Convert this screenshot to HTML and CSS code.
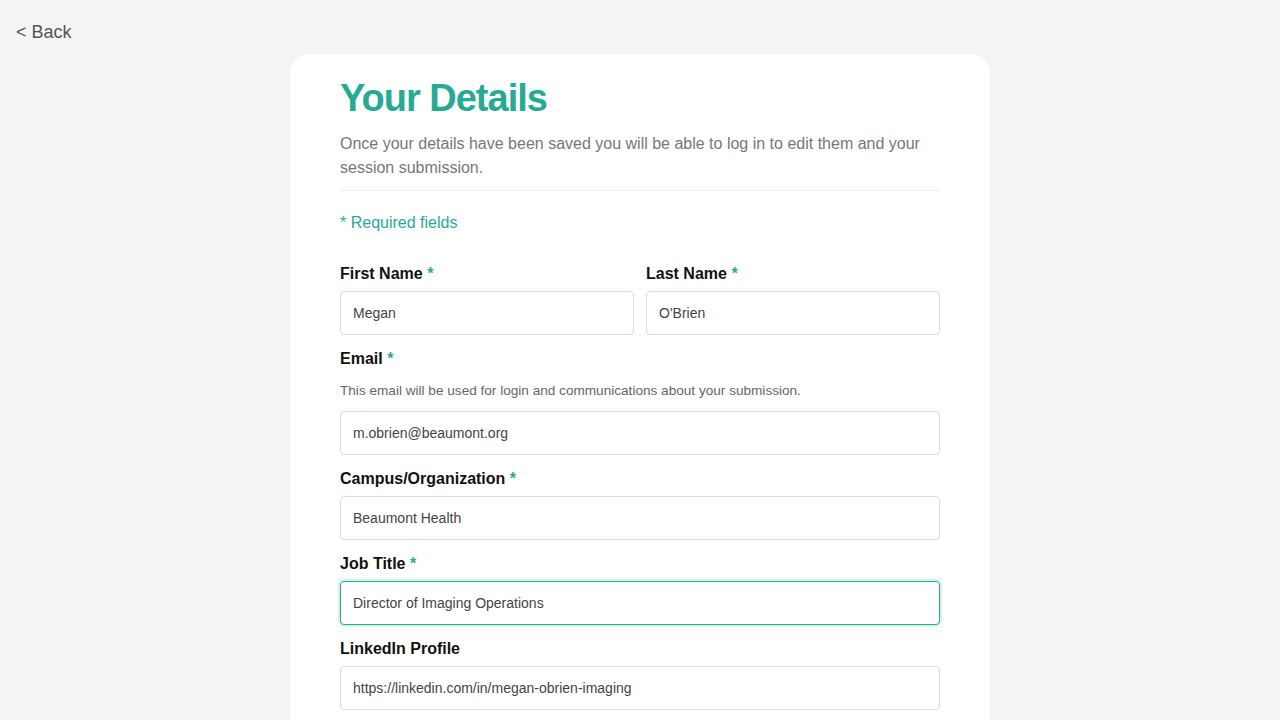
FILE: index.html
```html
<!DOCTYPE html>
<html lang="en">
<head>
    <meta charset="UTF-8">
    <meta name="viewport" content="width=device-width, initial-scale=1.0">
    <title>Your Details</title>
    <link rel="stylesheet" href="styles.css">
</head>
<body>
    <a class="back" href="#">&lt; Back</a>

    <main class="card">
        <h1>Your Details</h1>
        <p class="intro">Once your details have been saved you will be able to log in to edit them and your session submission.</p>
        <hr>
        <p class="required-note">* Required fields</p>

        <form id="detailsForm" class="form">
            <div class="row">
                <div class="field">
                    <label for="firstName">First Name <span class="req">*</span></label>
                    <input type="text" id="firstName" value="Megan">
                </div>
                <div class="field">
                    <label for="lastName">Last Name <span class="req">*</span></label>
                    <input type="text" id="lastName" value="O'Brien">
                </div>
            </div>

            <div class="field">
                <label for="email">Email <span class="req">*</span></label>
                <p class="help">This email will be used for login and communications about your submission.</p>
                <input type="email" id="email" value="m.obrien@beaumont.org">
            </div>

            <div class="field">
                <label for="campus">Campus/Organization <span class="req">*</span></label>
                <input type="text" id="campus" value="Beaumont Health">
            </div>

            <div class="field">
                <label for="jobTitle">Job Title <span class="req">*</span></label>
                <input type="text" id="jobTitle" class="focused" value="Director of Imaging Operations">
            </div>

            <div class="field">
                <label for="linkedin">LinkedIn Profile</label>
                <input type="url" id="linkedin" value="https://linkedin.com/in/megan-obrien-imaging">
            </div>
        </form>
    </main>
</body>
</html>
```

FILE: styles.css
```css
body {
    margin: 0;
    padding: 20px 0 0;
    background-color: #f4f4f4;
    font-family: "Liberation Sans", Arial, sans-serif;
    color: #111;
}
.back {
    display: block;
    margin-left: 16px;
    font-size: 18px;
    line-height: 24px;
    color: #555;
    text-decoration: none;
}
.card {
    width: 600px;
    margin: 10px auto 0;
    padding: 22px 50px 40px;
    background-color: #fff;
    border-radius: 20px;
}
h1 {
    margin: 0;
    font-size: 38px;
    line-height: 44px;
    letter-spacing: -1px;
    color: #27aa94;
}
.intro {
    margin: 12px 0 0;
    font-size: 16px;
    line-height: 24px;
    color: #777;
}
hr {
    margin: 10px 0 0;
    border: none;
    border-top: 1px solid #f0f0f0;
}
.required-note {
    margin: 21px 0 0;
    font-size: 16px;
    line-height: 22px;
    color: #27aa94;
}
.form {
    margin-top: 31px;
}
.row {
    display: flex;
    gap: 12px;
}
.row .field {
    flex: 1;
}
.field {
    margin-bottom: 15px;
}
label {
    display: block;
    margin-bottom: 8px;
    font-size: 16px;
    line-height: 18px;
    font-weight: bold;
    color: #111;
}
.req {
    color: #27aa94;
}
.help {
    margin: 14px 0 11px;
    font-size: 13.6px;
    line-height: 18px;
    color: #666;
}
input {
    display: block;
    box-sizing: border-box;
    width: 100%;
    height: 44px;
    padding: 0 12px;
    border: 1px solid #ddd;
    border-radius: 4px;
    font-family: inherit;
    font-size: 14px;
    color: #444;
    background-color: #fff;
    outline: none;
}
input.focused {
    border-color: #27aa94;
    box-shadow: 0 0 0 2px rgba(39, 170, 148, 0.18);
}
```
